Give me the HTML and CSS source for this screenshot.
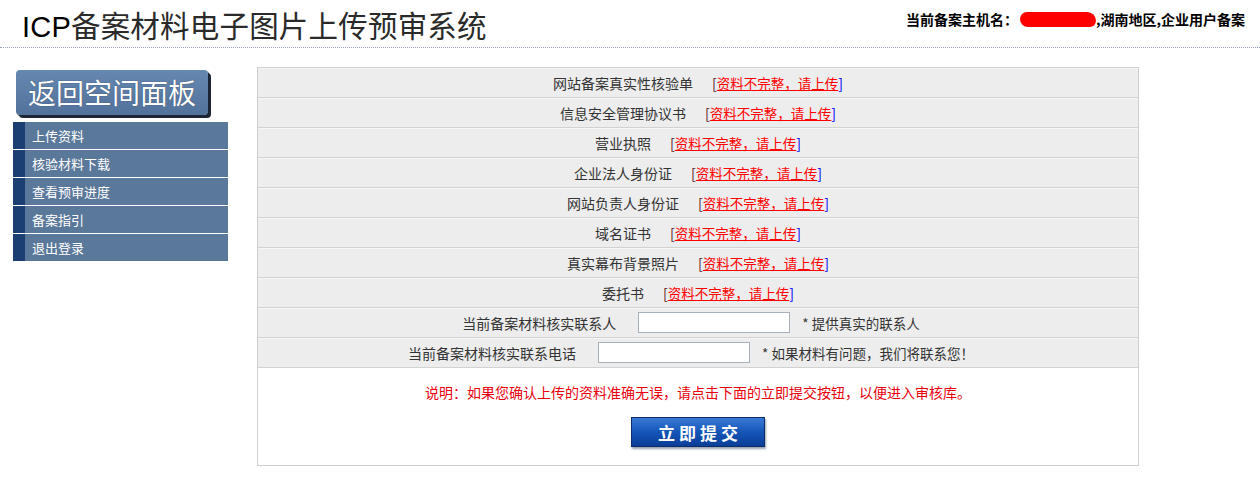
FILE: index.html
```html
<!DOCTYPE html>
<html lang="zh-CN">
<head>
<meta charset="utf-8">
<title>ICP备案材料电子图片上传预审系统</title>
<link rel="stylesheet" href="styles.css">
</head>
<body>
<header class="top">
  <h1 class="title"><span class="icp">ICP</span>备案材料电子图片上传预审系统</h1>
  <div class="host">当前备案主机名：<span class="blot"></span>,湖南地区,企业用户备案</div>
</header>
<div class="main">
  <aside class="side">
    <a class="back" href="#">返回空间面板</a>
    <ul class="menu">
      <li><a href="#">上传资料</a></li>
      <li><a href="#">核验材料下载</a></li>
      <li><a href="#">查看预审进度</a></li>
      <li><a href="#">备案指引</a></li>
      <li><a href="#">退出登录</a></li>
    </ul>
  </aside>
  <section class="panel">
    <div class="row"><span class="label">网站备案真实性核验单</span><span class="lb">[</span><a class="up" href="#">资料不完整，请上传</a><span class="rb">]</span></div>
    <div class="row"><span class="label">信息安全管理协议书</span><span class="lb">[</span><a class="up" href="#">资料不完整，请上传</a><span class="rb">]</span></div>
    <div class="row"><span class="label">营业执照</span><span class="lb">[</span><a class="up" href="#">资料不完整，请上传</a><span class="rb">]</span></div>
    <div class="row"><span class="label">企业法人身份证</span><span class="lb">[</span><a class="up" href="#">资料不完整，请上传</a><span class="rb">]</span></div>
    <div class="row"><span class="label">网站负责人身份证</span><span class="lb">[</span><a class="up" href="#">资料不完整，请上传</a><span class="rb">]</span></div>
    <div class="row"><span class="label">域名证书</span><span class="lb">[</span><a class="up" href="#">资料不完整，请上传</a><span class="rb">]</span></div>
    <div class="row"><span class="label">真实幕布背景照片</span><span class="lb">[</span><a class="up" href="#">资料不完整，请上传</a><span class="rb">]</span></div>
    <div class="row"><span class="label">委托书</span><span class="lb">[</span><a class="up" href="#">资料不完整，请上传</a><span class="rb">]</span></div>
    <div class="row form"><span class="flabel">当前备案材料核实联系人</span><input class="field" type="text"><span class="hint">* 提供真实的联系人</span></div>
    <div class="row form"><span class="flabel">当前备案材料核实联系电话</span><input class="field" type="text"><span class="hint">* 如果材料有问题，我们将联系您！</span></div>
    <div class="foot">
      <p class="note">说明：如果您确认上传的资料准确无误，请点击下面的立即提交按钮，以便进入审核库。</p>
      <button class="submit" type="button">立即提交</button>
    </div>
  </section>
</div>
</body>
</html>
```
FILE: styles.css
```css
body {
  margin: 0;
  background: #fff;
  font-family: "Noto Sans CJK SC", "Liberation Sans", sans-serif;
  color: #333;
}
.top {
  height: 47px;
  border-bottom: 1px dotted #98a0bc;
  display: flex;
  justify-content: space-between;
  align-items: flex-start;
}
.title {
  margin: 0;
  padding: 4px 0 0 22px;
  font-size: 29.5px;
  line-height: 40px;
  font-weight: normal;
  color: #2a2a2a;
  letter-spacing: 0.2px;
}
.icp {
  font-family: "Liberation Sans", Arial, sans-serif;
  font-size: 29px;
  color: #000;
}
.host {
  padding: 10px 15px 0 0;
  font-size: 14px;
  line-height: 18px;
  font-weight: bold;
  color: #000;
  display: flex;
  align-items: center;
}
.blot {
  display: inline-block;
  width: 76px;
  height: 15px;
  margin-left: 2px;
  background: #f00;
  border-radius: 8px 10px 7px 9px;
}
.main {
  display: flex;
  align-items: flex-start;
}
.side {
  margin: 22px 0 0 13px;
  width: 215px;
}
.back {
  display: block;
  margin-left: 3px;
  width: 192px;
  height: 45px;
  background: linear-gradient(#6687b0, #52729c);
  border-radius: 4px;
  box-shadow: 3px 3px 0 #1c2636, 1px 1px 1px #000;
  color: #fff;
  font-size: 28px;
  line-height: 45px;
  text-align: center;
  text-decoration: none;
  text-shadow: 0 0 1px #2a3a55;
}
.menu {
  list-style: none;
  margin: 7px 0 0;
  padding: 0;
}
.menu li {
  height: 27px;
  margin-bottom: 1px;
  background: #5a7899;
  border-left: 12px solid #1b3f72;
}
.menu a {
  display: block;
  padding-left: 7px;
  color: #fff;
  font-size: 13px;
  line-height: 27px;
  text-decoration: none;
}
.panel {
  margin: 19px 0 0 29px;
  width: 880px;
  border: 1px solid #cfcfcf;
}
.row {
  height: 29px;
  background: #ededed;
  border-bottom: 1px solid #d2d2d2;
  box-shadow: inset 0 1px 0 #f6f6f6;
  display: flex;
  justify-content: center;
  align-items: center;
  font-size: 14px;
  white-space: nowrap;
}
.label {
  margin-right: 19px;
  color: #333;
}
.lb {
  color: #5a1a1a;
}
.rb {
  color: #00f;
}
.up {
  color: #f00;
  font-size: 13.5px;
  text-decoration: underline;
}
.row.form {
  padding-right: 14px;
}
.flabel {
  margin-right: 22px;
}
.field {
  width: 146px;
  height: 17px;
  padding: 1px 2px;
  border: 1px solid #a8b0bc;
  background: #fff;
  margin: 0;
}
.hint {
  margin-left: 12px;
  color: #333;
  font-size: 13.5px;
}
.foot {
  height: 97px;
  background: #fff;
  display: flex;
  flex-direction: column;
  align-items: center;
}
.note {
  margin: 14px 0 0;
  color: #e8000d;
  font-size: 14px;
  line-height: 20px;
}
.submit {
  margin-top: 15px;
  width: 134px;
  height: 30px;
  border: 1px solid #0d2d6a;
  background: linear-gradient(#3a7ad6, #1455b8 50%, #0b3d96);
  box-shadow: 1px 2px 2px #9aa4b2;
  color: #fff;
  font-family: "Noto Sans CJK SC", serif;
  font-size: 17px;
  font-weight: bold;
  letter-spacing: 4px;
  padding: 0 0 0 4px;
}
```
